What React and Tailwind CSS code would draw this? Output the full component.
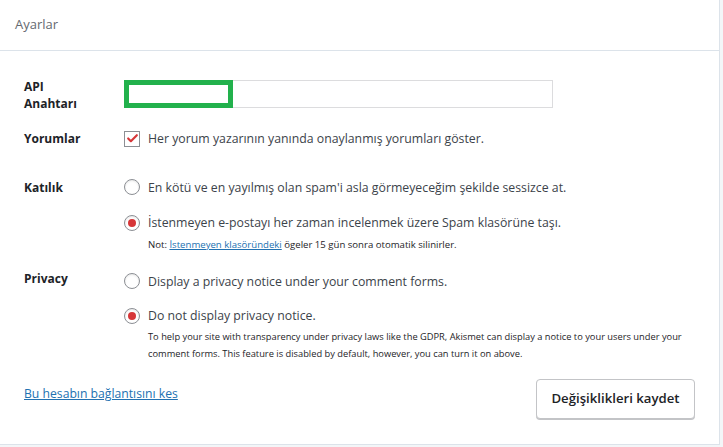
import { Check } from 'lucide-react';

function Radio({ checked }) {
  return (
    <span className="w-4 h-4 shrink-0 rounded-full border border-[#8c8f94] bg-white flex items-center justify-center shadow-[inset_0_1px_2px_rgba(0,0,0,0.1)]">
      {checked && <span className="w-2 h-2 rounded-full bg-[#d63638]" />}
    </span>
  );
}

function Row({ label, children, className = '' }) {
  return (
    <div className={`flex ${className}`}>
      <div className="w-[100px] shrink-0 font-bold text-[12px] leading-[17px] text-[#1d2327]">{label}</div>
      <div className="flex-1">{children}</div>
    </div>
  );
}

export default function App() {
  return (
    <div className="w-[723px] h-[447px] bg-[#f3f6f8] font-['Open_Sans',sans-serif] text-[#3c434a]">
      <div className="w-[720px] h-[445px] bg-white border-r border-b border-[#dce3ea] flex flex-col">
        <div className="h-[51px] border-b border-[#dce3ea] px-[15px] flex items-center">
          <h2 className="text-[13px] text-[#646970]">Ayarlar</h2>
        </div>

        <div className="px-6 pt-[29px] flex flex-col">
          <Row label={<span className="block -mt-[2px] mb-[2px]">API<br />Anahtarı</span>} className="items-start">
            <div className="relative w-[429px] h-[28px] border border-[#dcdcde] bg-white">
              <div className="absolute left-0 top-0 w-[109px] h-[28px] -m-px border-[5px] border-[#22b14c]" />
            </div>
          </Row>

          <Row label="Yorumlar" className="mt-[16px]">
            <label className="flex items-center gap-2 text-[12.3px] leading-[19.5px] -mt-[1px]">
              <span className="w-4 h-4 shrink-0 border border-[#8c8f94] bg-white flex items-center justify-center">
                <Check className="w-[13px] h-[13px] text-[#d63638]" strokeWidth={4} />
              </span>
              <span>Her yorum yazarının yanında onaylanmış yorumları göster.</span>
            </label>
          </Row>

          <Row label="Katılık" className="mt-[30px]">
            <div className="flex flex-col -mt-[1px]">
              <label className="flex items-center gap-2 text-[12.3px] leading-[19.5px]">
                <Radio />
                <span>En kötü ve en yayılmış olan spam'i asla görmeyeceğim şekilde sessizce at.</span>
              </label>
              <label className="flex items-center gap-2 text-[12.3px] leading-[19.5px] mt-[16px]">
                <Radio checked />
                <span>İstenmeyen e-postayı her zaman incelenmek üzere Spam klasörüne taşı.</span>
              </label>
              <p className="pl-6 text-[9.6px] leading-[14px] mt-[5px] text-[#1d2327]">
                Not: <a href="#" className="text-[#2271b1] underline">İstenmeyen klasöründeki</a> ögeler 15 gün sonra otomatik silinirler.
              </p>
            </div>
          </Row>

          <Row label="Privacy" className="mt-[18px]">
            <div className="flex flex-col mt-[2px]">
              <label className="flex items-center gap-2 text-[12.3px] leading-[19.5px]">
                <Radio />
                <span>Display a privacy notice under your comment forms.</span>
              </label>
              <label className="flex items-center gap-2 text-[12.3px] leading-[19.5px] mt-[15px]">
                <Radio checked />
                <span>Do not display privacy notice.</span>
              </label>
              <p className="pl-6 text-[9.3px] leading-[17px] mt-[2px] text-[#1d2327]">
                To help your site with transparency under privacy laws like the GDPR, Akismet can display a notice to your users under your comment forms. This feature is disabled by default, however, you can turn it on above.
              </p>
            </div>
          </Row>
        </div>

        <div className="mt-auto mb-[25px] pl-6 pr-[24px] flex items-start justify-between">
          <a href="#" className="text-[12.2px] text-[#2271b1] underline mt-[6px]">Bu hesabın bağlantısını kes</a>
          <button className="w-[159px] h-[40px] rounded border border-[#c3c4c7] bg-white text-[13.2px] font-semibold text-[#1d2327] shadow-[0_1px_0_#c3c4c7]">
            Değişiklikleri kaydet
          </button>
        </div>
      </div>
    </div>
  );
}
